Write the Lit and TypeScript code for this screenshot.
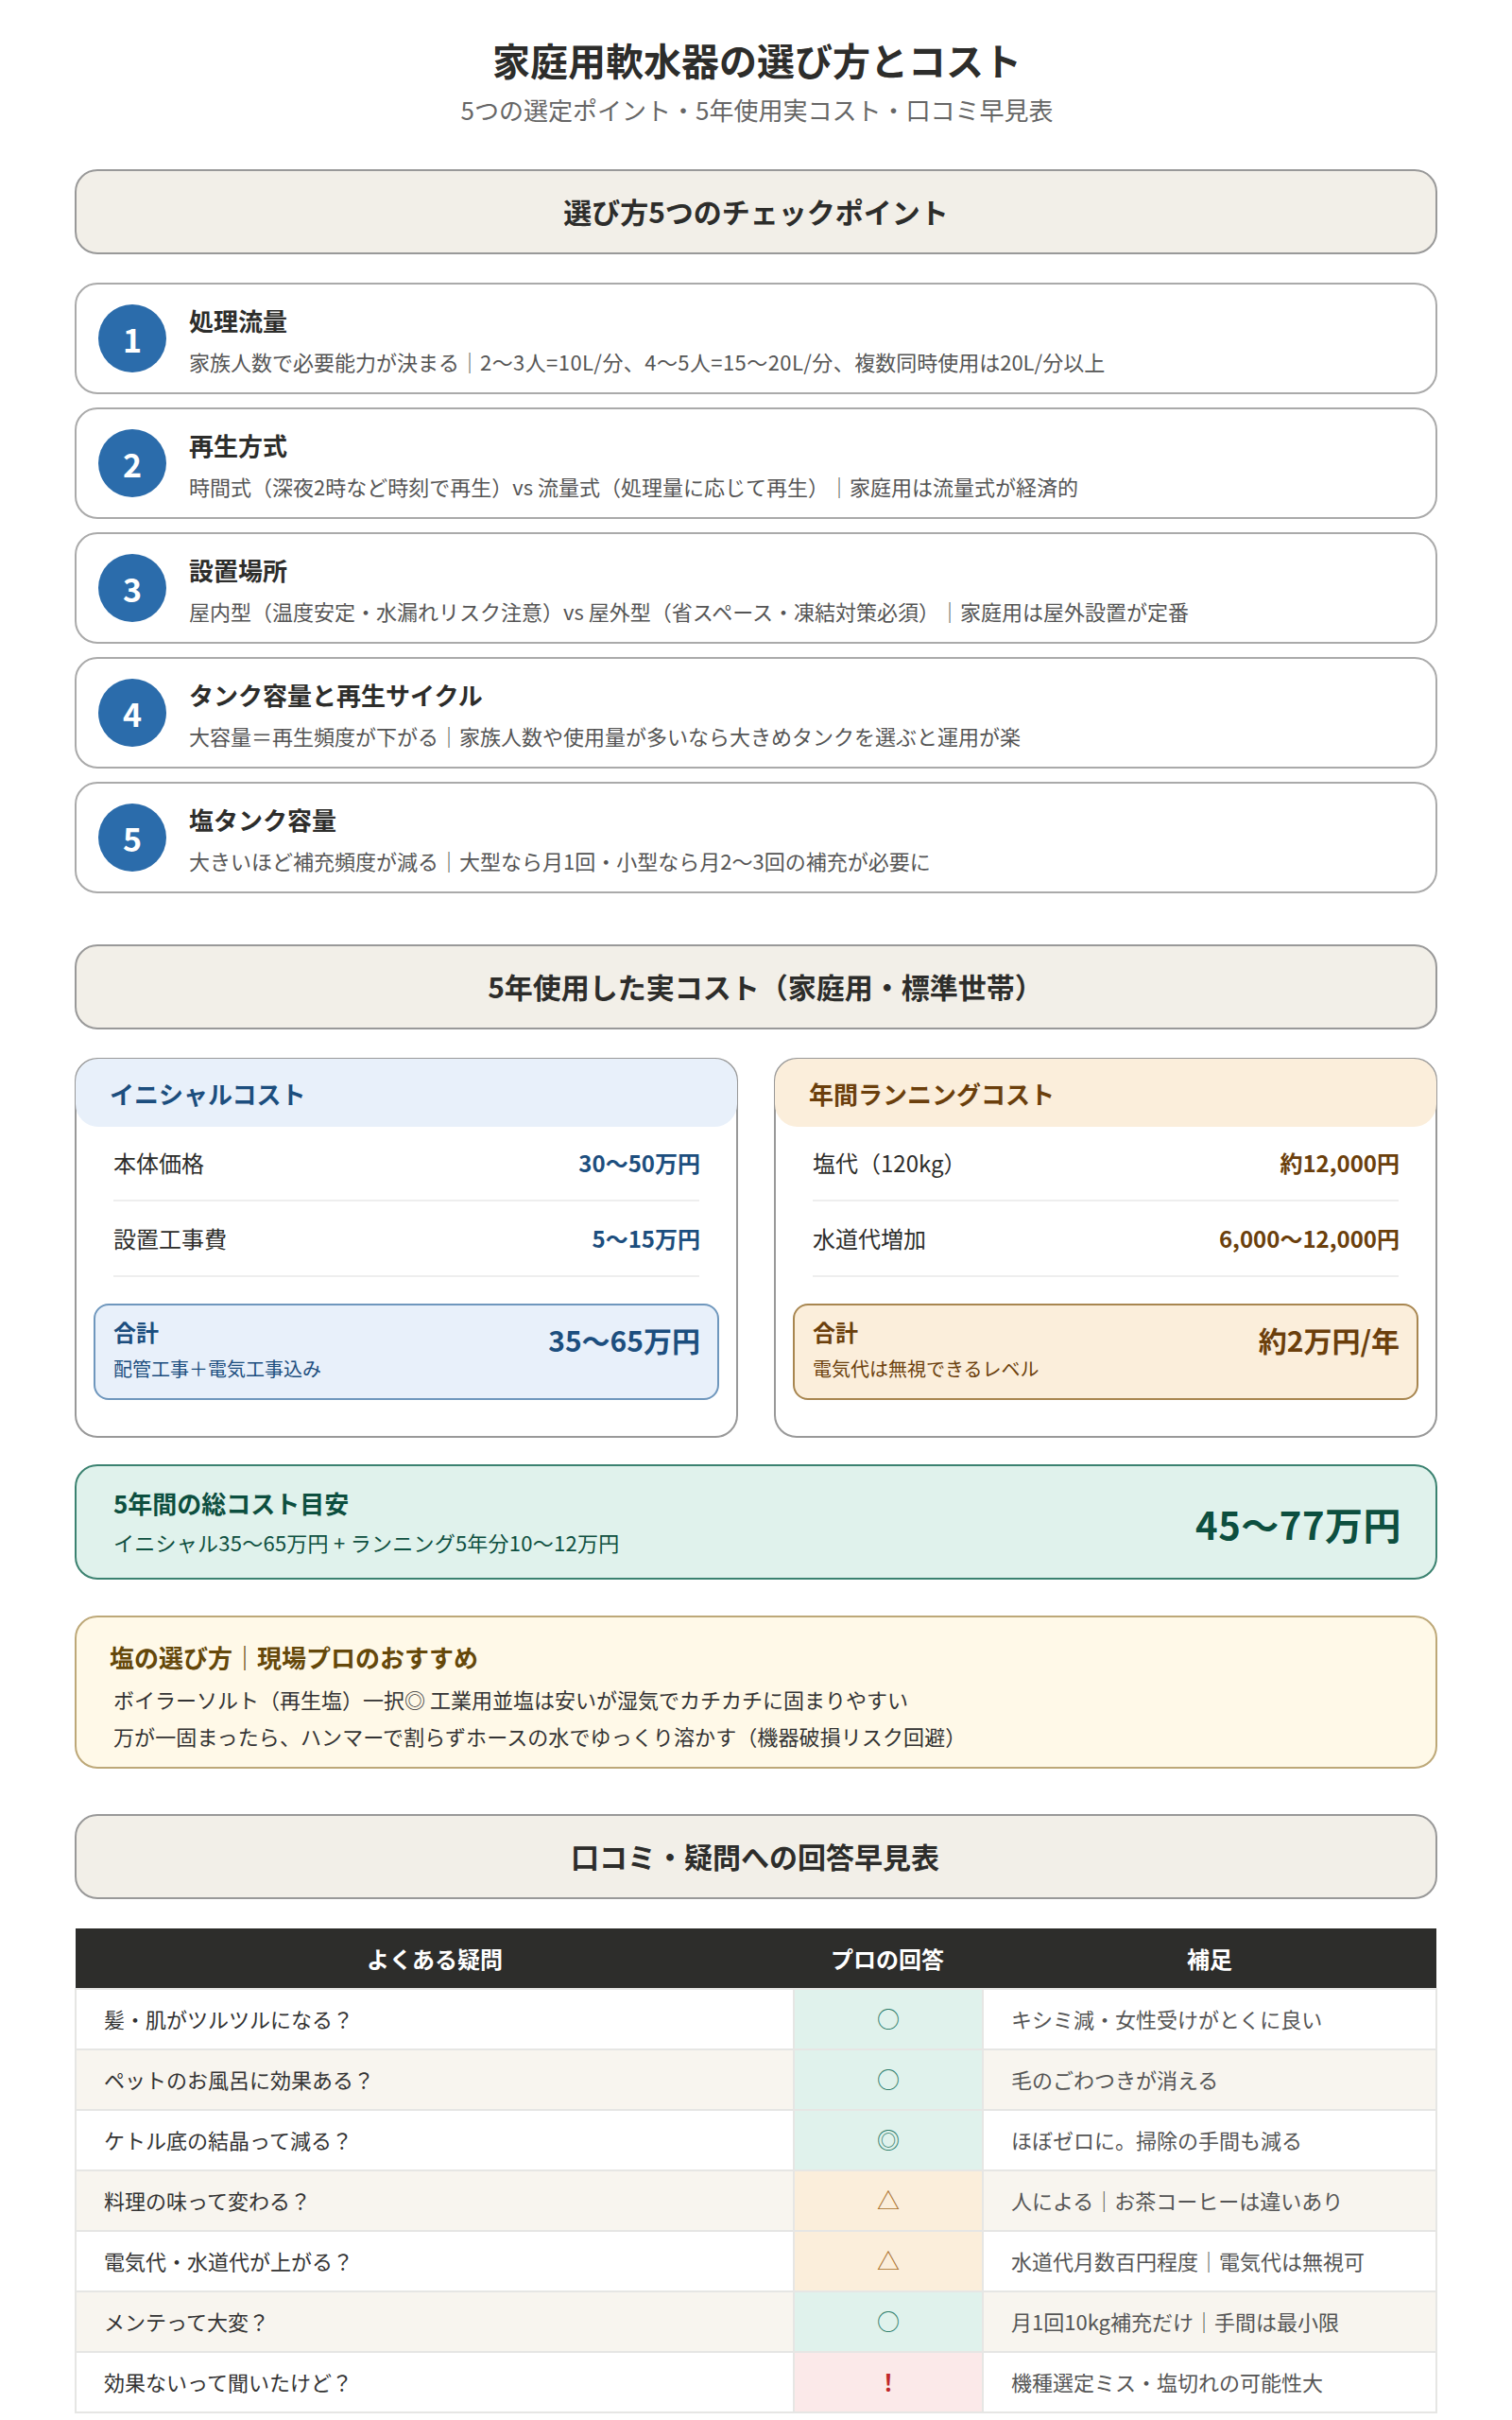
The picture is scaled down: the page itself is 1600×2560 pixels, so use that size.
import { LitElement, html, css } from "lit";
import { customElement } from "lit/decorators.js";

const points = [
  ["処理流量", "家族人数で必要能力が決まる｜", "2〜3人=10L/分、4〜5人=15〜20L/分、", "複数同時使用は20L/分以上"],
  ["再生方式", "時間式（深夜2時など時刻で再生）vs 流量式（処理量に応じて再生）｜家庭用は流量式が経済的"],
  ["設置場所", "屋内型（温度安定・水漏れリスク注意）vs 屋外型（省スペース・凍結対策必須）｜家庭用は屋外設置が定番"],
  ["タンク容量と再生サイクル", "大容量＝再生頻度が下がる｜家族人数や使用量が多いなら大きめタンクを選ぶと運用が楽"],
  ["塩タンク容量", "大きいほど補充頻度が減る｜大型なら月1回・小型なら月2〜3回の補充が必要に"],
];

const faq = [
  ["髪・肌がツルツルになる？", "○", "good", "キシミ減・女性受けがとくに良い"],
  ["ペットのお風呂に効果ある？", "○", "good", "毛のごわつきが消える"],
  ["ケトル底の結晶って減る？", "◎", "good", "ほぼゼロに。掃除の手間も減る"],
  ["料理の味って変わる？", "△", "warn", "人による｜お茶コーヒーは違いあり"],
  ["電気代・水道代が上がる？", "△", "warn", "水道代月数百円程度｜電気代は無視可"],
  ["メンテって大変？", "○", "good", "月1回10kg補充だけ｜手間は最小限"],
  ["効果ないって聞いたけど？", "！", "bad", "機種選定ミス・塩切れの可能性大"],
];

@customElement("app-root")
export class AppRoot extends LitElement {
  static styles = css`
    :host {
      display: block;
      width: 1600px;
      height: 2560px;
      box-sizing: border-box;
      padding: 0 79px;
      background: #fff;
      overflow: hidden;
      font-family: "Noto Sans CJK JP", "Noto Sans", sans-serif;
      color: #2d2d2b;
    }
    * { box-sizing: border-box; }
    header { height: 179px; padding: 36px 0 0 2px; text-align: center; }
    h1 { margin: 0; font-size: 40px; line-height: 54px; font-weight: 700; }
    .subtitle { margin: 8px 0 0; font-size: 26px; line-height: 36px; color: #666; }
    .band {
      height: 90px;
      margin: 0;
      padding-bottom: 2px;
      border: 2px solid #999;
      border-radius: 24px;
      background: #f2efe8;
      display: flex;
      align-items: center;
      justify-content: center;
      font-size: 30px;
      font-weight: 700;
    }
    .points { display: flex; flex-direction: column; gap: 14px; margin-top: 30px; }
    .point {
      height: 118px;
      border: 2px solid #aaa;
      border-radius: 24px;
      padding: 0 23px;
      display: flex;
      align-items: center;
      gap: 24px;
    }
    .num {
      width: 72px;
      height: 72px;
      flex: none;
      border-radius: 50%;
      background: #2b6cab;
      color: #fff;
      display: flex;
      align-items: center;
      justify-content: center;
      font-size: 34px;
      font-weight: 700;
    }
    .pt-title { padding-top: 1px; font-size: 26px; line-height: 38px; font-weight: 700; }
    .pt-desc { margin-top: 8px; font-size: 22px; line-height: 32px; color: #555; }
    .wide { letter-spacing: 0.42px; }
    .cost-band { margin-top: 54px; padding-left: 20px; }
    .costs { display: grid; grid-template-columns: 702px 702px; gap: 38px; margin-top: 30px; }
    .cost {
      height: 402px;
      border: 2px solid #999;
      border-radius: 24px;
    }
    .cost-head {
      height: 72px;
      margin: -1px -1px 0;
      padding: 0 36px;
      border-radius: 24px;
      display: flex;
      align-items: center;
      font-size: 26px;
      font-weight: 700;
    }
    .blue .cost-head, .blue .total { background: #e8f0fa; }
    .amber .cost-head, .amber .total { background: #fbeedb; }
    .blue { --ink: #1c4e7e; --edge: #6f97bd; }
    .amber { --ink: #6b3f0c; --edge: #a88650; }
    .cost-head, .total, .val { color: var(--ink); }
    .rows { margin-top: -1px; padding: 0 39px; }
    .row {
      height: 80px;
      padding-bottom: 2px;
      border-bottom: 2px solid #eee;
      display: flex;
      align-items: center;
      justify-content: space-between;
      font-size: 24px;
    }
    .val { font-weight: 700; margin-right: -1px; }
    .total {
      height: 102px;
      margin: 28px 18px 0;
      padding: 11px 19px 0;
      border: 2px solid var(--edge);
      border-radius: 16px;
      display: flex;
      align-items: flex-start;
      justify-content: space-between;
    }
    .total-label { font-size: 24px; line-height: 34px; font-weight: 700; }
    .total-sub { margin-top: 8px; font-size: 20px; line-height: 28px; }
    .total-val { margin: 3px -1px 0 0; font-size: 30px; line-height: 44px; font-weight: 700; }
    .grand {
      height: 122px;
      margin-top: 28px;
      padding: 0 36px 0 39px;
      border: 2px solid #3b8270;
      border-radius: 24px;
      background: #e0f2ec;
      display: flex;
      align-items: center;
      justify-content: space-between;
      color: #0d4f3f;
    }
    .grand-title { font-size: 26px; line-height: 38px; font-weight: 700; }
    .grand-sub { margin: 6px 0 3px; font-size: 22px; line-height: 32px; letter-spacing: 0.25px; }
    .grand-val { margin-top: 3px; font-size: 40px; font-weight: 700; letter-spacing: 0.5px; }
    .salt {
      height: 162px;
      margin-top: 38px;
      padding: 22px 35px 0;
      border: 2px solid #bda878;
      border-radius: 24px;
      background: #fff9e8;
    }
    .salt-title { margin-bottom: 5px; font-size: 26px; line-height: 40px; font-weight: 700; color: #65480a; }
    .salt-line { padding-left: 4px; font-size: 22px; line-height: 39px; color: #333; }
    .salt-line + .salt-line { letter-spacing: 0.1px; }
    .faq-band { margin-top: 48px; padding-right: 2px; }
    table {
      width: 1442px;
      margin-top: 31px;
      border-collapse: collapse;
      table-layout: fixed;
    }
    .c1 { width: 760px; }
    .c2 { width: 200px; }
    .c3 { width: 480px; }
    th {
      height: 64px;
      padding: 0;
      background: #2d2d2b;
      color: #fff;
      font-size: 24px;
      font-weight: 700;
      text-align: center;
    }
    th:nth-child(2) { padding-right: 2px; }
    td {
      height: 64px;
      padding: 0 29px 3px;
      border: 2px solid #e6e6e4;
      font-size: 22px;
      color: #333;
    }
    tbody tr:nth-child(even) td { background: #f8f5ef; }
    td.note { color: #555; }
    tbody tr td.mark { padding: 0 0 3px; text-align: center; font-size: 24px; }
    tbody tr td.good { background: #e0f2ec; color: #2e7d6a; }
    tbody tr td.warn { background: #fbeedb; color: #a9702a; }
    tbody tr td.bad { background: #fbe9e9; color: #c0282a; font-weight: 700; }
  `;

  private costCard(tone: string, title: string, rows: string[][], label: string, sub: string, total: string) {
    return html`<section class="cost ${tone}">
      <div class="cost-head">${title}</div>
      <div class="rows">
        ${rows.map((r) => html`<div class="row"><span>${r[0]}</span><span class="val">${r[1]}</span></div>`)}
      </div>
      <div class="total">
        <div><div class="total-label">${label}</div><div class="total-sub">${sub}</div></div>
        <div class="total-val">${total}</div>
      </div>
    </section>`;
  }

  render() {
    return html`
      <header>
        <h1>家庭用軟水器の選び方とコスト</h1>
        <p class="subtitle">5つの選定ポイント・5年使用実コスト・口コミ早見表</p>
      </header>

      <h2 class="band">選び方5つのチェックポイント</h2>
      <div class="points">
        ${points.map(
          (p, i) => html`<div class="point">
            <div class="num">${i + 1}</div>
            <div>
              <div class="pt-title">${p[0]}</div>
              <div class="pt-desc">${p[1]}${p.length > 2 ? html`<span class="wide">${p[2]}</span>${p[3]}` : ""}</div>
            </div>
          </div>`
        )}
      </div>

      <h2 class="band cost-band">5年使用した実コスト（家庭用・標準世帯）</h2>
      <div class="costs">
        ${this.costCard("blue", "イニシャルコスト", [["本体価格", "30〜50万円"], ["設置工事費", "5〜15万円"]], "合計", "配管工事＋電気工事込み", "35〜65万円")}
        ${this.costCard("amber", "年間ランニングコスト", [["塩代（120kg）", "約12,000円"], ["水道代増加", "6,000〜12,000円"]], "合計", "電気代は無視できるレベル", "約2万円/年")}
      </div>

      <div class="grand">
        <div>
          <div class="grand-title">5年間の総コスト目安</div>
          <div class="grand-sub">イニシャル35〜65万円 + ランニング5年分10〜12万円</div>
        </div>
        <div class="grand-val">45〜77万円</div>
      </div>

      <div class="salt">
        <div class="salt-title">塩の選び方｜現場プロのおすすめ</div>
        <div class="salt-line">ボイラーソルト（再生塩）一択◎ 工業用並塩は安いが湿気でカチカチに固まりやすい</div>
        <div class="salt-line">万が一固まったら、ハンマーで割らずホースの水でゆっくり溶かす（機器破損リスク回避）</div>
      </div>

      <h2 class="band faq-band">口コミ・疑問への回答早見表</h2>
      <table>
        <colgroup><col class="c1" /><col class="c2" /><col class="c3" /></colgroup>
        <thead><tr><th>よくある疑問</th><th>プロの回答</th><th>補足</th></tr></thead>
        <tbody>
          ${faq.map(
            (r) => html`<tr><td>${r[0]}</td><td class="mark ${r[2]}">${r[1]}</td><td class="note">${r[3]}</td></tr>`
          )}
        </tbody>
      </table>
    `;
  }
}
